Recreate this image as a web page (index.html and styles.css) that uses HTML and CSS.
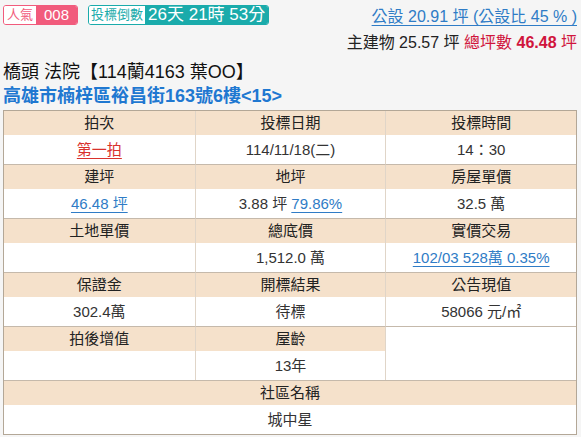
FILE: index.html
```html
<!DOCTYPE html>
<html lang="zh-Hant">
<head>
<meta charset="utf-8">
<title>拍賣物件</title>
<link rel="stylesheet" href="styles.css">
</head>
<body>
<div class="page">
  <header class="top">
    <div class="badges">
      <span class="badge pink"><span class="lbl">人氣</span><span class="val">008</span></span>
      <span class="badge teal"><span class="lbl">投標倒數</span><span class="val big">26天 21時 53分</span></span>
    </div>
    <div class="area">
      <div class="line"><a class="link" href="#">公設 20.91 坪 (公設比 45 % )</a></div>
      <div class="line">主建物 25.57 坪 <span class="total">總坪數 <b>46.48</b> 坪</span></div>
    </div>
  </header>
  <h1 class="title">橋頭 法院【114蘭4163 葉OO】</h1>
  <h2 class="addr">高雄市楠梓區裕昌街163號6樓&lt;15&gt;</h2>
  <div class="grid">
    <div class="field first top-row"><div class="h">拍次</div><div class="v"><a class="red" href="#">第一拍</a></div></div>
    <div class="field top-row"><div class="h">投標日期</div><div class="v">114/11/18(二)</div></div>
    <div class="field top-row"><div class="h">投標時間</div><div class="v">14：30</div></div>

    <div class="field first"><div class="h">建坪</div><div class="v"><a class="link" href="#">46.48 坪</a></div></div>
    <div class="field"><div class="h">地坪</div><div class="v">3.88 坪 <a class="link" href="#">79.86%</a></div></div>
    <div class="field"><div class="h">房屋單價</div><div class="v">32.5 萬</div></div>

    <div class="field first"><div class="h">土地單價</div><div class="v"></div></div>
    <div class="field"><div class="h">總底價</div><div class="v">1,512.0 萬</div></div>
    <div class="field"><div class="h">實價交易</div><div class="v"><a class="link" href="#">102/03 528萬 0.35%</a></div></div>

    <div class="field first"><div class="h">保證金</div><div class="v">302.4萬</div></div>
    <div class="field"><div class="h">開標結果</div><div class="v">待標</div></div>
    <div class="field"><div class="h">公告現值</div><div class="v">58066 元/㎡</div></div>

    <div class="field first"><div class="h">拍後增值</div><div class="v"></div></div>
    <div class="field"><div class="h">屋齡</div><div class="v">13年</div></div>
    <div class="field empty"></div>

    <div class="field first full"><div class="h">社區名稱</div><div class="v">城中星</div></div>
  </div>
</div>
</body>
</html>
```

FILE: styles.css
```css
* { box-sizing: border-box; }
html, body { margin: 0; padding: 0; }
body {
  background: #f5f5f5;
  font-family: "Liberation Sans", "Noto Sans CJK TC", sans-serif;
  color: #222;
}
.page { padding: 0 4px 0 3px; }

.top {
  display: flex;
  justify-content: space-between;
  align-items: flex-start;
  padding-top: 4px;
}
.badges { display: flex; gap: 10px; margin-top: 1px; }
.badge {
  display: inline-flex;
  height: 20px;
  border-radius: 3px;
  overflow: hidden;
  border: 1px solid;
}
.badge .lbl {
  background: #fff;
  font-size: 13px;
  line-height: 18px;
  padding: 0 3px;
}
.badge .val {
  color: #fff;
  font-size: 15px;
  line-height: 18px;
  padding: 0 8px;
}
.badge .val.big { font-size: 17px; padding: 0 3px; }
.pink { border-color: #f15b7c; }
.pink .lbl { color: #f15b7c; }
.pink .val { background: #f15b7c; }
.teal { border-color: #1aabab; }
.teal .lbl { color: #1aabab; padding: 0 2px; }
.teal .val { background: #1aabab; }

.area { text-align: right; font-size: 16px; line-height: 26px; }
.link { color: #2f7cc6; text-decoration: underline; text-underline-offset: 3px; text-decoration-thickness: 1px; }
.total { color: #d0143c; }
.total b { font-weight: bold; }

.title {
  margin: 4px 0 0;
  font-size: 18px;
  font-weight: normal;
  line-height: 24px;
  color: #111;
}
.addr {
  margin: 0 0 2px;
  font-size: 18px;
  font-weight: bold;
  line-height: 24px;
  color: #1f78d1;
}

.grid {
  display: grid;
  grid-template-columns: repeat(3, 1fr);
  border: 1px solid #b3a797;
  background: #fff;
  font-size: 15px;
  color: #333;
  text-align: center;
}
.field {
  border-top: 1px solid #c5b9ab;
  border-left: 1px solid #e0d5c8;
  display: flex;
  flex-direction: column;
}
.field.first { border-left: none; }
.field.top-row { border-top: none; }
.field.full { grid-column: 1 / -1; }
.field .h {
  background: #f5e1cb;
  height: 24px;
  line-height: 24px;
  color: #222;
}
.field .v {
  height: 29px;
  line-height: 29px;
}
.red { color: #d9312d; text-decoration: underline; text-underline-offset: 3px; }
```
